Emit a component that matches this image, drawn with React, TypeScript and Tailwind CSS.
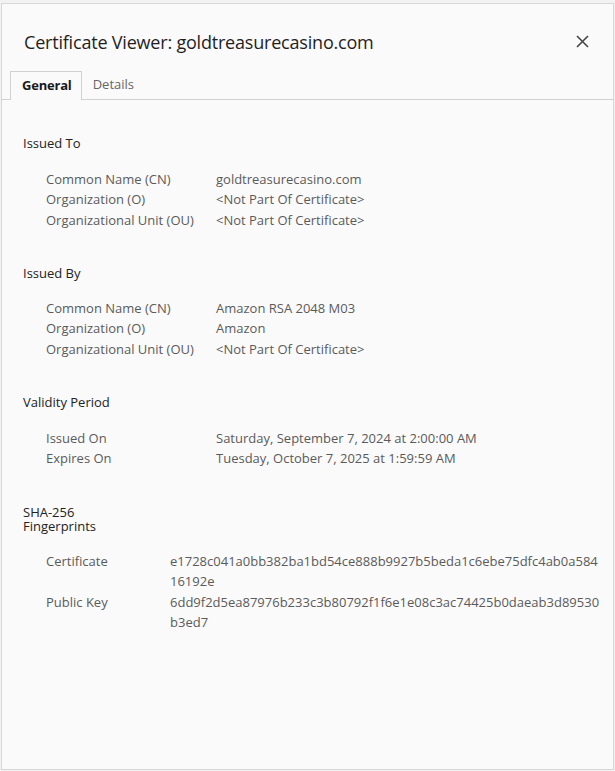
import React from "react";

const Row = ({ label, value, vx = "w-[170px]" }: { label: string; value: React.ReactNode; vx?: string }) => (
  <div className="flex">
    <div className={`${vx} shrink-0`}>{label}</div>
    <div>{value}</div>
  </div>
);

export default function App() {
  return (
    <div
      className="w-[615px] h-[771px] bg-[#f3f2f2] pt-[3px] px-[1px] pb-[1px]"
      style={{ fontFamily: '"Open Sans", "Noto Sans", sans-serif' }}
    >
      <div className="w-full h-full bg-[#fbfafa] border border-[#d9d6d8] flex flex-col">
        <div className="flex items-center justify-between pl-[22px] pr-[22px] pt-[9px] h-[67px] shrink-0">
          <div className="text-[18px] text-[#1f1f1f] tracking-[-0.2px]">Certificate Viewer: goldtreasurecasino.com</div>
          <svg width="13" height="13" viewBox="0 0 13 13" className="mr-[2px] -mt-[1px]">
            <path d="M1 1 L12 12 M12 1 L1 12" stroke="#444" strokeWidth="1.6" />
          </svg>
        </div>
        <div className="flex items-end border-b border-[#d2d0d0] h-[29px] pl-[8px] shrink-0">
          <div className="h-[29px] pl-[11px] pr-[9px] border border-b-0 border-[#d2d0d0] bg-[#fbfafa] -mb-[1px] flex items-center text-[13px] font-bold text-[#1a1a1a] tracking-[-0.2px]">
            General
          </div>
          <div className="h-[28px] px-[11px] flex items-center text-[13px] text-[#666]">Details</div>
        </div>
        <div className="pl-[21px] text-[13px] leading-[20.5px] text-[#5a5a5a]">
          <div className="mt-[33px] text-[#222]">Issued To</div>
          <div className="pl-[23px] mt-[15px]">
            <Row label="Common Name (CN)" value="goldtreasurecasino.com" />
            <Row label="Organization (O)" value="<Not Part Of Certificate>" />
            <Row label="Organizational Unit (OU)" value="<Not Part Of Certificate>" />
          </div>
          <div className="mt-[33px] text-[#222]">Issued By</div>
          <div className="pl-[23px] mt-[14px]">
            <Row label="Common Name (CN)" value="Amazon RSA 2048 M03" />
            <Row label="Organization (O)" value="Amazon" />
            <Row label="Organizational Unit (OU)" value="<Not Part Of Certificate>" />
          </div>
          <div className="mt-[33px] text-[#222]">Validity Period</div>
          <div className="pl-[23px] mt-[15px]">
            <Row label="Issued On" value="Saturday, September 7, 2024 at 2:00:00 AM" />
            <Row label="Expires On" value="Tuesday, October 7, 2025 at 1:59:59 AM" />
          </div>
          <div className="mt-[36px] text-[#222] leading-[14.5px]">
            SHA-256
            <br />
            Fingerprints
          </div>
          <div className="pl-[23px] mt-[17px]">
            <Row
              vx="w-[124px]"
              label="Certificate"
              value={
                <>
                  e1728c041a0bb382ba1bd54ce888b9927b5beda1c6ebe75dfc4ab0a584
                  <br />
                  16192e
                </>
              }
            />
            <Row
              vx="w-[124px]"
              label="Public Key"
              value={
                <>
                  6dd9f2d5ea87976b233c3b80792f1f6e1e08c3ac74425b0daeab3d89530
                  <br />
                  b3ed7
                </>
              }
            />
          </div>
        </div>
      </div>
    </div>
  );
}
